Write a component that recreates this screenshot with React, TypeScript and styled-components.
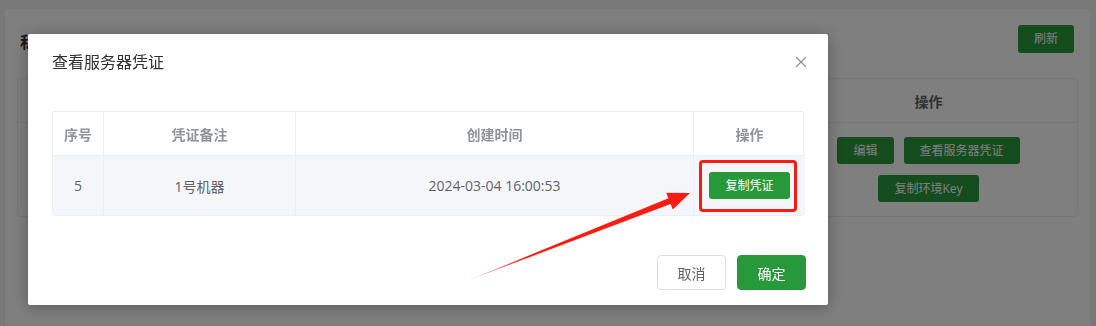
import React from "react";
import styled, { createGlobalStyle } from "styled-components";

const GlobalStyle = createGlobalStyle`
  html, body {
    margin: 0;
    padding: 0;
    background: #f2f2f2;
    overflow: hidden;
    font-family: "Open Sans", "Noto Sans CJK SC", sans-serif;
  }
`;

const Page = styled.div`
  width: 1096px;
  height: 326px;
  padding: 9px 6px 0 5px;
  box-sizing: border-box;
  overflow: hidden;
`;

const Card = styled.div`
  background: #ffffff;
  border-radius: 4px;
  padding: 16px 12px 0 12px;
  height: 400px;
  box-sizing: border-box;
`;

const CardHeader = styled.div`
  display: flex;
  justify-content: space-between;
  align-items: center;
  padding: 0 4px 0 3px;
  margin-bottom: 25px;
`;

const CardTitle = styled.div`
  font-size: 16px;
  line-height: 20px;
  margin-top: 6px;
  font-weight: 700;
  color: #303133;
`;

const GreenButton = styled.button<{ $h?: number }>`
  height: ${(p) => p.$h ?? 27}px;
  padding: 0 16px;
  border: none;
  border-radius: 3px;
  background: #28993b;
  color: #ffffff;
  font-family: inherit;
  font-size: 12px;
  line-height: 1;
  white-space: nowrap;
  cursor: pointer;
`;

const BgTable = styled.div`
  display: grid;
  grid-template-columns: 1fr 298px;
  border: 1px solid #ebeef5;
  border-radius: 4px;
`;

const BgHead = styled.div`
  height: 43px;
  display: flex;
  align-items: center;
  justify-content: center;
  font-size: 14px;
  font-weight: 700;
  color: #606266;
  border-bottom: 1px solid #ebeef5;
  & + & {
    border-left: 1px solid #ebeef5;
  }
`;

const BgCell = styled.div`
  padding: 14px 12px;
  display: flex;
  flex-wrap: wrap;
  justify-content: center;
  gap: 11px 10px;
  & + & {
    border-left: 1px solid #ebeef5;
  }
`;

const Mask = styled.div`
  position: fixed;
  inset: 0;
  background: rgba(0, 0, 0, 0.5);
`;

const Dialog = styled.div`
  position: absolute;
  left: 28px;
  top: 34px;
  width: 800px;
  height: 271px;
  background: #ffffff;
  border-radius: 2px;
  box-shadow: 0 2px 16px rgba(0, 0, 0, 0.3);
  display: flex;
  flex-direction: column;
`;

const DialogHeader = styled.div`
  display: flex;
  justify-content: space-between;
  align-items: center;
  padding: 16px 19px 0 24px;
  height: 24px;
`;

const DialogTitle = styled.div`
  font-size: 16px;
  line-height: 24px;
  color: #303133;
`;

const CloseButton = styled.button`
  width: 16px;
  height: 16px;
  padding: 0;
  border: none;
  background: none;
  display: flex;
  align-items: center;
  justify-content: center;
  cursor: pointer;
`;

const DialogBody = styled.div`
  padding: 37px 24px 0;
`;

const Table = styled.div`
  display: grid;
  grid-template-columns: 50px 192px 398px 112px;
  border: 1px solid #ebeef5;
  border-radius: 3px;
`;

const HeadCell = styled.div`
  height: 43px;
  display: flex;
  align-items: center;
  justify-content: center;
  font-size: 14px;
  font-weight: 700;
  color: #909399;
  border-bottom: 1px solid #ebeef5;
  border-left: 1px solid #ebeef5;
  &:first-child {
    border-left: none;
  }
`;

const BodyCell = styled.div<{ $first?: boolean }>`
  position: relative;
  height: 59px;
  display: flex;
  align-items: center;
  justify-content: center;
  font-size: 14px;
  color: #606266;
  background: #f5f6fa;
  border-left: ${(p) => (p.$first ? "none" : "1px solid #ebeef5")};
`;

const Highlight = styled.div`
  position: absolute;
  left: 5px;
  right: 8px;
  top: 4px;
  bottom: 3px;
  border: 3px solid #fa1c12;
  border-radius: 4px;
  pointer-events: none;
`;

const DialogFooter = styled.div`
  margin-top: auto;
  display: flex;
  justify-content: flex-end;
  gap: 11px;
  padding: 0 22px 15px;
`;

const FooterButton = styled.button<{ $primary?: boolean }>`
  width: 69px;
  height: 35px;
  border-radius: 4px;
  font-family: inherit;
  font-size: 14px;
  cursor: pointer;
  border: 1px solid ${(p) => (p.$primary ? "#28993b" : "#dcdfe6")};
  background: ${(p) => (p.$primary ? "#28993b" : "#ffffff")};
  color: ${(p) => (p.$primary ? "#ffffff" : "#606266")};
`;

const ArrowLayer = styled.svg`
  position: absolute;
  left: 0;
  top: 0;
  width: 800px;
  height: 271px;
  pointer-events: none;
`;

const CloseIcon = () => (
  <svg width="12" height="12" viewBox="0 0 12 12">
    <path d="M1 1L11 11M11 1L1 11" stroke="#909399" strokeWidth="1.3" fill="none" />
  </svg>
);

const App: React.FC = () => {
  return (
    <>
      <GlobalStyle />
      <Page>
        <Card>
          <CardHeader>
            <CardTitle>私有服务器列表</CardTitle>
            <GreenButton $h={28}>刷新</GreenButton>
          </CardHeader>
          <BgTable>
            <BgHead>服务器名称</BgHead>
            <BgHead>操作</BgHead>
            <BgCell />
            <BgCell>
              <GreenButton>编辑</GreenButton>
              <GreenButton>查看服务器凭证</GreenButton>
              <GreenButton>复制环境Key</GreenButton>
            </BgCell>
          </BgTable>
        </Card>
      </Page>
      <Mask>
        <Dialog>
          <DialogHeader>
            <DialogTitle>查看服务器凭证</DialogTitle>
            <CloseButton>
              <CloseIcon />
            </CloseButton>
          </DialogHeader>
          <DialogBody>
            <Table>
              <HeadCell>序号</HeadCell>
              <HeadCell>凭证备注</HeadCell>
              <HeadCell>创建时间</HeadCell>
              <HeadCell>操作</HeadCell>
              <BodyCell $first>5</BodyCell>
              <BodyCell>1号机器</BodyCell>
              <BodyCell>2024-03-04 16:00:53</BodyCell>
              <BodyCell>
                <GreenButton>复制凭证</GreenButton>
                <Highlight />
              </BodyCell>
            </Table>
          </DialogBody>
          <DialogFooter>
            <FooterButton>取消</FooterButton>
            <FooterButton $primary>确定</FooterButton>
          </DialogFooter>
          <ArrowLayer viewBox="0 0 800 271">
            <defs>
              <linearGradient id="arrowFade" gradientUnits="userSpaceOnUse" x1="436" y1="248" x2="500" y2="223">
                <stop offset="0" stopColor="#fa1c12" stopOpacity="0.1" />
                <stop offset="1" stopColor="#fa1c12" stopOpacity="1" />
              </linearGradient>
            </defs>
            <polygon
              points="436,248 642.6,169.9 644.8,175.4 662,159 638.2,158.7 640.4,164.3"
              fill="url(#arrowFade)"
            />
          </ArrowLayer>
        </Dialog>
      </Mask>
    </>
  );
};

export default App;
